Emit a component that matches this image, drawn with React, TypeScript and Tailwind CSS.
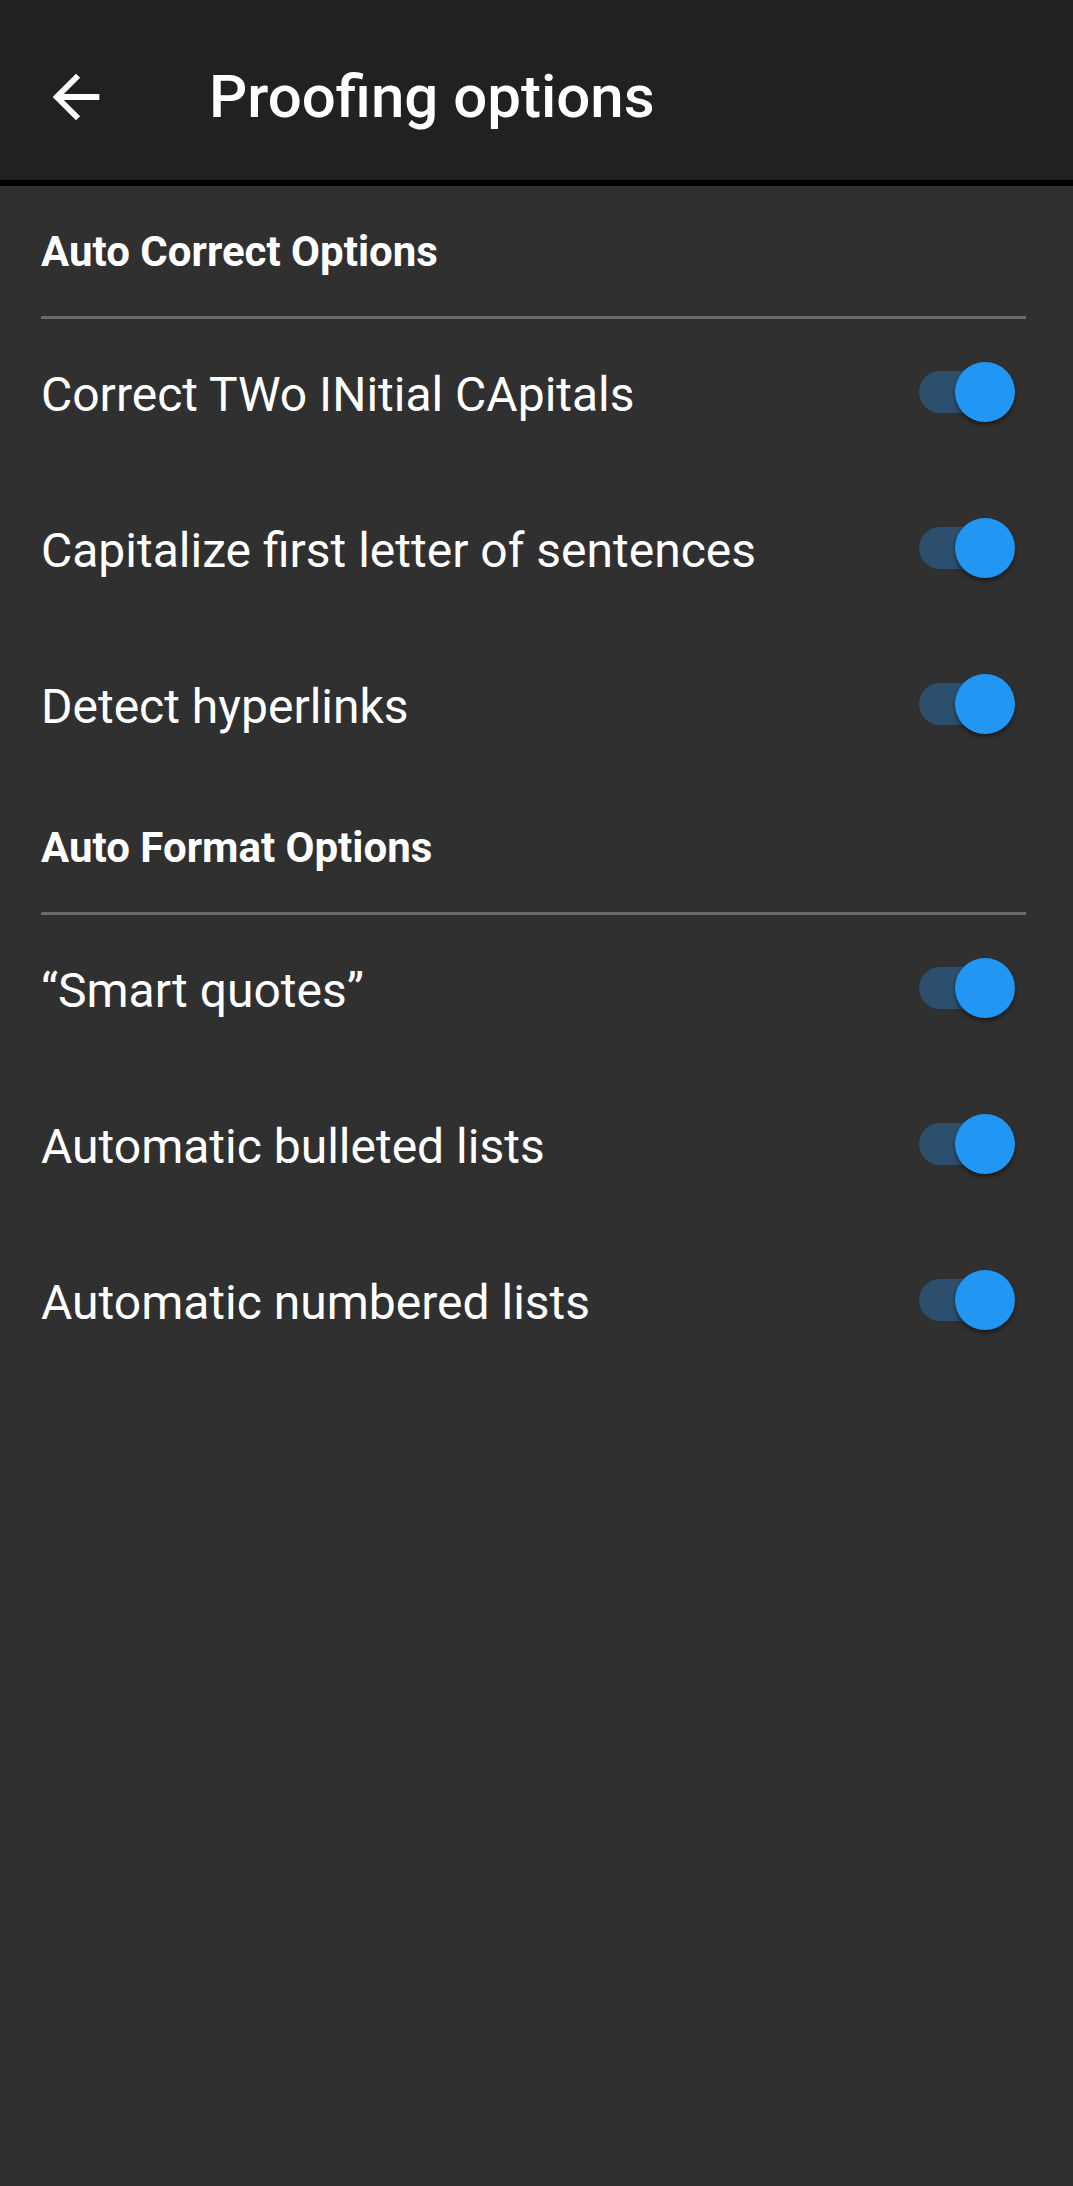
import React from 'react';

type Option = { label: string; on: boolean };

const sections: { title: string; options: Option[] }[] = [
  {
    title: 'Auto Correct Options',
    options: [
      { label: 'Correct TWo INitial CApitals', on: true },
      { label: 'Capitalize first letter of sentences', on: true },
      { label: 'Detect hyperlinks', on: true },
    ],
  },
  {
    title: 'Auto Format Options',
    options: [
      { label: '\u201CSmart quotes\u201D', on: true },
      { label: 'Automatic bulleted lists', on: true },
      { label: 'Automatic numbered lists', on: true },
    ],
  },
];

const Toggle: React.FC<{ on: boolean }> = ({ on }) => (
  <div className="relative w-[96px] h-[60px] shrink-0">
    <div
      className={
        'absolute left-0 top-[9px] h-[42px] w-[82px] rounded-full ' +
        (on ? 'bg-[#2c4f6d]' : 'bg-[#5a5a5a]')
      }
    />
    <div
      className={
        'absolute top-0 h-[60px] w-[60px] rounded-full shadow-[0_3px_4px_rgba(0,0,0,0.45)] ' +
        (on ? 'right-0 bg-[#2196f3]' : 'left-0 bg-[#bdbdbd]')
      }
    />
  </div>
);

const App: React.FC = () => {
  return (
    <div
      className="min-h-[2186px] w-full flex flex-col bg-[#303030] text-white"
      style={{ fontFamily: 'Roboto, "Noto Sans", sans-serif' }}
    >
      {/* Toolbar */}
      <header className="h-[180px] bg-[#212121] flex items-center pt-[14px] pl-[41px]">
        <svg width="70" height="70" viewBox="0 0 24 24" fill="#ffffff">
          <path d="M20 11H7.83l5.59-5.59L12 4l-8 8 8 8 1.41-1.41L7.83 13H20v-2z" />
        </svg>
        <h1 className="ml-[98px] text-[60px] font-medium leading-[70px]">
          Proofing options
        </h1>
      </header>
      <div className="h-[6px] bg-black" />

      <main className="flex flex-col">
        {sections.map((section) => (
          <section key={section.title} className="flex flex-col">
            <div className="h-[130px] flex items-center pl-[41px] pt-[2px]">
              <h2 className="text-[42px] font-bold leading-[50px]">
                {section.title}
              </h2>
            </div>
            <div className="h-[3px] ml-[41px] mr-[47px] bg-[#6b6b6b]" />
            <ul className="flex flex-col -mt-[5px]">
              {section.options.map((opt) => (
                <li
                  key={opt.label}
                  className="h-[156px] flex items-center justify-between pl-[41px] pr-[58px]"
                >
                  <span className="text-[48px] leading-[56px] pt-[5px]">
                    {opt.label}
                  </span>
                  <Toggle on={opt.on} />
                </li>
              ))}
            </ul>
          </section>
        ))}
      </main>
    </div>
  );
};

export default App;
